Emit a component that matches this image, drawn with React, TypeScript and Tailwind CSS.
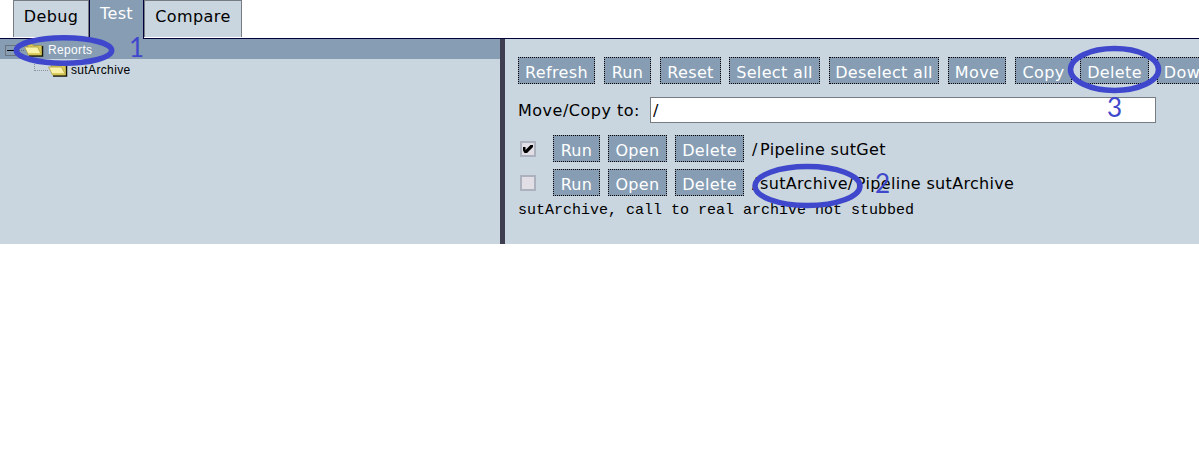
import React from "react";

function Folder() {
  return (
    <svg width="20" height="14" viewBox="0 0 20 14" className="shrink-0">
      <path d="M3 2L4 1H8L9.5 2.5H17.5L18.3 12.5H6Z" fill="#d9c858" stroke="#8f8530" strokeWidth=".6" />
      <path d="M18.6 3V13H5" fill="none" stroke="#16160a" strokeWidth="1.3" />
      <path d="M.6 4H13.5L17.6 12H4.5Z" fill="#f8f2a8" stroke="#a39735" strokeWidth=".7" />
      <path d="M3.8 10.3H16.4L17.2 11.8H4.6Z" fill="#d5c04a" />
    </svg>
  );
}

function Button({ children, className }: { children: React.ReactNode; className: string }) {
  return (
    <button className={`h-[27px] shrink-0 whitespace-nowrap border border-dotted border-black bg-[#869db4] text-center leading-[27px] tracking-[0.35px] text-white ${className}`}>
      <span className="block translate-y-px">{children}</span>
    </button>
  );
}

function Row({ checked, segments }: { checked?: boolean; segments: string[] }) {
  return (
    <div className="flex h-[27px] items-center">
      <span className="mr-[17px] ml-[2px] flex size-4 items-center justify-center border-2 border-[#abb2bd] bg-[#e1dfe5]">
        {checked && (
          <svg width="12" height="12" viewBox="0 0 12 12" className="shrink-0">
            <path d="M1 4H3.5V7L8.5 2H11V4L5 10H2.5L1 7.5Z" fill="#000" />
          </svg>
        )}
      </span>
      <Button className="mr-2 w-[47px]">Run</Button>
      <Button className="mr-2 w-[59px]">Open</Button>
      <Button className="mr-2 w-[69px]">Delete</Button>
      <span className="whitespace-nowrap pt-[2px] tracking-[0.32px]">
        {segments.map((segment) => (
          <React.Fragment key={segment}>
            <span className="mr-[2.3px]">/</span>
            {segment}
          </React.Fragment>
        ))}
      </span>
    </div>
  );
}

export default function App() {
  return (
    <div className="relative h-[466px] w-[1199px] overflow-hidden bg-white font-['DejaVu_Sans',sans-serif] text-[16px] text-black">
      <nav className="flex h-[38px] items-start pl-[13px]">
        <div className="h-[37px] w-[76px] border border-b-0 border-[#777c82] bg-[#c9d5df] text-center leading-[31px] tracking-[0.4px]">Debug</div>
        <div className="relative h-[39px] w-[55px] border-x border-[#02023c] bg-[#869db4] text-center leading-[27px] tracking-[0.4px] text-white">Test</div>
        <div className="h-[37px] w-[98px] border border-b-0 border-[#777c82] bg-[#c9d5df] text-center leading-[31px] tracking-[0.4px]">Compare</div>
      </nav>
      <main className="flex h-[206px] border-t border-[#02023c] bg-[#c9d5df]">
        <aside className="w-[500px] shrink-0 font-['Liberation_Sans',sans-serif] text-[12px] tracking-[0.35px]">
          <div className="flex h-5 items-center bg-[#869db4] pt-[2px] pl-[5px] text-white">
            <span className="flex size-[11px] items-center justify-center border border-[#69747e]"><i className="h-px w-[7px] bg-black" /></span>
            <i className="w-2 border-t border-dotted border-[#68717b]" />
            <Folder />
            <span className="ml-1">Reports</span>
          </div>
          <div className="flex h-[22px] items-center pl-[34px]">
            <i className="mt-[-10px] h-[11px] w-[14px] border-b border-l border-dotted border-[#8a939b]" />
            <Folder />
            <span className="ml-[3px]">sutArchive</span>
          </div>
        </aside>
        <div className="w-[5px] shrink-0 bg-[#3e3e50]" />
        <section className="min-w-0 flex-1 overflow-hidden pt-[18px] pl-[13px]">
          <div className="flex">
            <Button className="mr-[9px] w-[77px]">Refresh</Button>
            <Button className="mr-[9px] w-[47px]">Run</Button>
            <Button className="mr-2 w-[61px]">Reset</Button>
            <Button className="mr-[9px] w-[91px]">Select all</Button>
            <Button className="mr-[9px] w-[110px]">Deselect all</Button>
            <Button className="mr-[9px] w-[58px]">Move</Button>
            <Button className="mr-2 w-[57px]">Copy</Button>
            <Button className="mr-2 w-[69px]">Delete</Button>
            <Button className="w-[96px]">Download</Button>
          </div>
          <div className="mt-[13px] flex h-[26px] items-center">
            <label className="w-[132px] pt-[2px] tracking-[0.5px]">Move/Copy to:</label>
            <input readOnly value="/" className="h-[26px] w-[506px] border border-[#777c82] bg-white pt-px pl-[2px]" />
          </div>
          <div className="mt-3"><Row checked segments={["Pipeline sutGet"]} /></div>
          <div className="mt-[7px]"><Row segments={["sutArchive", "Pipeline sutArchive"]} /></div>
          <pre className="mt-[6px] font-['Liberation_Mono',monospace] text-[15px] leading-[18px]">sutArchive, call to real archive not stubbed</pre>
        </section>
      </main>
      <svg className="pointer-events-none absolute inset-0" width="1199" height="466" fill="none" stroke="#3f48cc" strokeWidth="5.5">
        <ellipse cx="64" cy="50.5" rx="47.7" ry="12.7" />
        <ellipse cx="807.5" cy="186" rx="52.5" ry="19.5" />
        <ellipse cx="1114.5" cy="69.5" rx="44" ry="21" />
      </svg>
      <span className="absolute top-[32px] left-[129px] font-['Lato',sans-serif] text-[26px] leading-[30px] text-[#3f48cc]">1</span>
      <span className="absolute top-[168px] left-[875px] font-['Lato',sans-serif] text-[26px] leading-[30px] text-[#3f48cc]">2</span>
      <span className="absolute top-[92px] left-[1107px] font-['Lato',sans-serif] text-[26px] leading-[30px] text-[#3f48cc]">3</span>
    </div>
  );
}
